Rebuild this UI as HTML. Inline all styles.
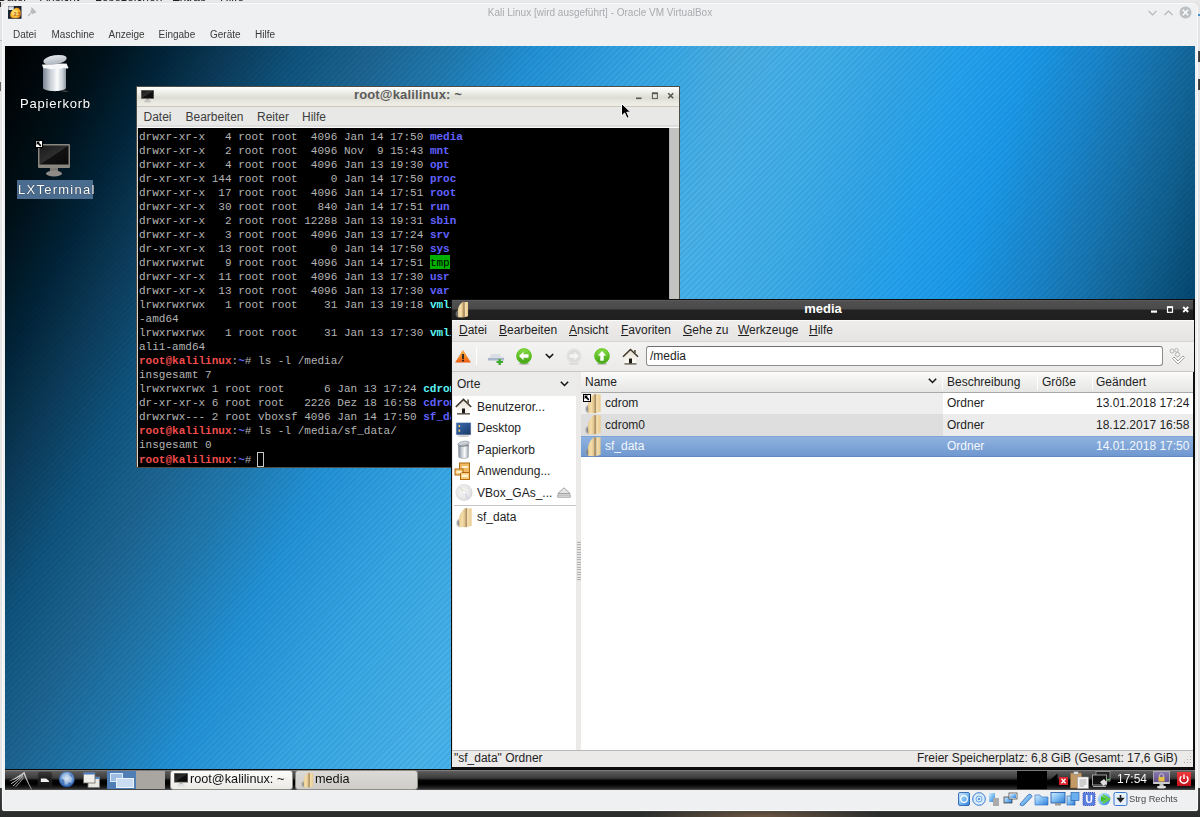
<!DOCTYPE html>
<html><head><meta charset="utf-8">
<style>
*{margin:0;padding:0;box-sizing:border-box}
html,body{width:1200px;height:817px;overflow:hidden;background:#e6e6e6;font-family:"Liberation Sans",sans-serif}
.a{position:absolute}
svg{position:absolute;overflow:visible}
#host-top{left:0;top:0;width:1200px;height:3px;background:#e9e9e9;overflow:hidden}
#host-top span{position:absolute;top:-10px;font-size:12px;color:#222;white-space:nowrap}
#host-bot{left:0;top:788px;width:1200px;height:29px;background:radial-gradient(ellipse 120px 10px at 760px 28px,#6a5540,rgba(0,0,0,0)),linear-gradient(#3a3c3c,#2a2c2c)}
#vbox{left:2px;top:3px;width:1196px;height:808px;background:#eff0f1;border:1px solid #fbfbfb;border-radius:4px 4px 2px 2px;box-shadow:0 0 1px #bbb}
#vbtitle{left:0;top:3px;width:1194px;text-align:center;font-size:10px;color:#a8abae}
.vbm{top:25px;font-size:10px;color:#3a3a3a}
#desk{left:5px;top:46px;width:1190px;height:724px;overflow:hidden;background:linear-gradient(117deg,#000000 -0.0%,#001018 6.1%,#012439 10.4%,#0b3856 14.0%,#0f547e 19.1%,#1d6694 24.1%,#207bb1 29.1%,#2292d7 34.2%,#36a6e5 41.4%,#49b3ea 50.0%,#41b2f1 55.8%,#29a4f0 63.0%,#1a9ae8 68.0%,#197fbf 73.1%,#11679c 78.1%,#084f7a 83.1%,#003759 88.2%,#001f38 100.0%)}
#deskR{left:675px;top:0;width:515px;height:260px;background:linear-gradient(107deg,#4faad4 0.0%,#4badde 6.4%,#47b0e8 16.9%,#3eade9 27.5%,#32a6e8 38.0%,#24a2ee 48.6%,#1b9ae9 59.1%,#1a88d0 69.7%,#1774af 80.3%,#0f5e8d 90.8%,#04466f 100.0%);-webkit-mask-image:linear-gradient(to right,rgba(0,0,0,0) 0,#000 70px);mask-image:linear-gradient(to right,rgba(0,0,0,0) 0,#000 70px)}
#stripes{left:0;top:0;width:1190px;height:724px;mix-blend-mode:multiply;background:repeating-linear-gradient(135deg,rgba(0,0,0,0) 0 2.1px,rgba(0,0,0,0.055) 2.1px 4.2px)}
.dlabel{color:#fff;font-size:13px;letter-spacing:0.5px;white-space:nowrap;text-shadow:0 0 1px #000}
/* terminal */
#term{left:136px;top:86px;width:544px;height:382px;background:#edece8;border:1px solid #4f4c45;box-shadow:inset 0 0 0 1px #d8d6cc}
#ttitle{left:0;top:0;width:542px;height:20px;background:linear-gradient(#ffffff 0,#f4f4f0 18%,#e6e6de 42%,#dcdcd2 55%,#e8e8e0 78%,#eeede6 100%);border-bottom:1px solid #cbc9bc}
#ttext{left:0;top:0px;width:542px;text-align:center;font-size:13px;font-weight:bold;color:#5b5b5b;letter-spacing:0.15px;padding-right:0}
#tmenu{left:0px;top:20px;width:542px;height:21px;background:#e8e8e6;border-bottom:1px solid #fbfbfb;box-shadow:inset 0 -2px 0 #dedede}
.tm{top:3px;font-size:12px;color:#3c3c3c}
#tscreen{left:1px;top:41px;width:532px;height:339px;background:#000;overflow:hidden}
#tsb{left:532px;top:41px;width:10px;height:339px;background:#c3c3c1;border-left:1px solid #b0b0ae}
pre{font-family:"Liberation Mono",monospace;font-size:11.03px;line-height:14px;color:#b4b4b4;position:absolute;left:1.0px;top:1.5px;white-space:pre}
.b{color:#6262ff;font-weight:bold}
.c{color:#5cf5f5;font-weight:bold}
.r{color:#f24c4c;font-weight:bold}
.tg{background:#00b000;color:#000;padding:1.5px 0 0.8px}
.cur{display:inline-block;width:7px;height:15px;border:1px solid #c8c8c8;vertical-align:-4px;margin-left:-1px}
/* file manager */
#fm{left:451px;top:299px;width:744px;height:470px;background:#e9e8e7;border:1px solid #0e0e0e;border-width:1px 2px 2px 1px}
#fmtitle{left:0;top:0;width:741px;height:20px;background:linear-gradient(#666 0,#505050 1px,#4a4a4a 45%,#222 50%,#1f1f1f 100%)}
#fmtext{left:0;top:1px;width:742px;text-align:center;font-size:13px;font-weight:bold;color:#fff}
#fmmenu{left:0;top:20px;width:742px;height:21px;background:linear-gradient(#efeeed,#e5e4e3);border-top:1px solid #fafafa}
.fmm{top:2px;font-size:12px;color:#1e1e1e}
.fmm i{font-style:normal;text-decoration:underline;text-underline-offset:1px}
#fmtool{left:0;top:41px;width:742px;height:31px;background:linear-gradient(#f3f3f2,#ebeae9);border-top:1px solid #d6d5d3;border-bottom:1px solid #c8c7c5}
#loc{left:194px;top:4px;width:517px;height:20px;background:#fff;border:1px solid #8e8d8b;border-top-color:#6f6e6c;border-radius:3px;font-size:12px;color:#1e1e1e;padding:2px 0 0 3px}
#side{left:1px;top:72px;width:123px;height:378px;background:#fff}
#sidehd{left:0;top:0;width:123px;height:24px;background:#ececeb}
.si{left:24px;font-size:12px;color:#1e1e1e;white-space:nowrap}
#split{left:124px;top:72px;width:5px;height:378px;background:#ebeae9}
#list{left:129px;top:72px;width:612px;height:378px;background:#fff;overflow:hidden}
#lhd{left:0;top:0;width:612px;height:21px;background:linear-gradient(#fbfbfb,#f2f2f1 40%,#e6e6e5);border-bottom:1px solid #a9a9a8}
.lh{top:3px;font-size:12px;color:#1e1e1e;white-space:nowrap}
.sep{top:3px;width:1px;height:15px;background:#d0d0cf;border-right:1px solid #fff}
.lt{font-size:12px;color:#1e1e1e;white-space:nowrap}
#fmstat{left:0;top:450px;width:741px;height:17px;background:#ebeae9;border-top:1px solid #b9b9b8}
/* taskbar */
#task{left:5px;top:769px;width:1190px;height:21px;border-top:1px solid #0a0a0a;background:linear-gradient(#8a8a8a 0,#5a5a5a 8%,#3c3c3c 40%,#050505 52%,#000 70%,#222 90%,#555 100%)}
#vbstat{left:0;top:787px;width:1194px;height:20px}
.tb{top:0px;height:20px;border:1px solid #8f8d88;border-radius:3px;background:linear-gradient(#fbfbfa,#ebeae6);font-size:12.7px;color:#111;white-space:nowrap}
</style></head><body>
<div class="a" id="host-top"><span style="left:-2px">Datei</span><span style="left:40px">Ansicht</span><span style="left:95px">Lesezeichen</span><span style="left:172px">Extras</span><span style="left:220px">Hilfe</span></div>
<div class="a" id="host-bot"></div>
<div class="a" style="left:0;top:2px;width:1px;height:5px;background:#333"></div><div class="a" style="left:0;top:40px;width:2px;height:1px;background:#bbb"></div><div class="a" style="left:0;top:82px;width:1px;height:9px;background:#666"></div>
<div class="a" style="left:1198px;top:51px;width:2px;height:11px;background:#3a3a3a"></div><div class="a" style="left:1198px;top:79px;width:2px;height:11px;background:#3a3a3a"></div><div class="a" style="left:1197px;top:14px;width:3px;height:2px;background:#3b8fd0"></div>
<div class="a" id="vbox">
  <div class="a" id="vbtitle">Kali Linux [wird ausgeführt] - Oracle VM VirtualBox</div>
  <div class="a vbm" style="left:10px">Datei</div>
  <div class="a vbm" style="left:48.5px">Maschine</div>
  <div class="a vbm" style="left:105.5px">Anzeige</div>
  <div class="a vbm" style="left:155.5px">Eingabe</div>
  <div class="a vbm" style="left:207px">Geräte</div>
  <div class="a vbm" style="left:252px">Hilfe</div>
</div>
<div class="a" id="desk"><div class="a" id="deskR"></div><div class="a" id="stripes"></div></div>
<div class="a dlabel" style="left:20px;top:96px;letter-spacing:0.8px">Papierkorb</div>
<div class="a" style="left:17px;top:180px;width:76px;height:19px;background:#4a6c8f"></div>
<div class="a dlabel" style="left:18px;top:182px;letter-spacing:1.25px">LXTerminal</div>

<div class="a" id="term">
  <div class="a" id="ttitle"><div class="a" id="ttext">root@kalilinux: ~</div></div>
  <div class="a" id="tmenu">
    <div class="a tm" style="left:6.5px">Datei</div>
    <div class="a tm" style="left:48.5px">Bearbeiten</div>
    <div class="a tm" style="left:120px">Reiter</div>
    <div class="a tm" style="left:165px">Hilfe</div>
  </div>
  <div class="a" id="tscreen"><pre>drwxr-xr-x   4 root root  4096 Jan 14 17:50 <span class="b">media</span>
drwxr-xr-x   2 root root  4096 Nov  9 15:43 <span class="b">mnt</span>
drwxr-xr-x   4 root root  4096 Jan 13 19:30 <span class="b">opt</span>
dr-xr-xr-x 144 root root     0 Jan 14 17:50 <span class="b">proc</span>
drwxr-xr-x  17 root root  4096 Jan 14 17:51 <span class="b">root</span>
drwxr-xr-x  30 root root   840 Jan 14 17:51 <span class="b">run</span>
drwxr-xr-x   2 root root 12288 Jan 13 19:31 <span class="b">sbin</span>
drwxr-xr-x   3 root root  4096 Jan 13 17:24 <span class="b">srv</span>
dr-xr-xr-x  13 root root     0 Jan 14 17:50 <span class="b">sys</span>
drwxrwxrwt   9 root root  4096 Jan 14 17:51 <span class="tg">tmp</span>
drwxr-xr-x  11 root root  4096 Jan 13 17:30 <span class="b">usr</span>
drwxr-xr-x  13 root root  4096 Jan 13 17:30 <span class="b">var</span>
lrwxrwxrwx   1 root root    31 Jan 13 19:18 <span class="c">vmlinuz</span> -&gt; boot/vmlinuz-4.14.0-kali1
-amd64
lrwxrwxrwx   1 root root    31 Jan 13 17:30 <span class="c">vmlinuz.old</span> -&gt; boot/vmlinuz-4.13.0-k
ali1-amd64
<span class="r">root@kalilinux</span>:<span class="b">~</span># ls -l /media/
insgesamt 7
lrwxrwxrwx 1 root root      6 Jan 13 17:24 <span class="c">cdrom</span> -&gt; <span class="b">/media/cdrom0</span>
dr-xr-xr-x 6 root root   2226 Dez 18 16:58 <span class="b">cdrom0</span>
drwxrwx--- 2 root vboxsf 4096 Jan 14 17:50 <span class="b">sf_data</span>
<span class="r">root@kalilinux</span>:<span class="b">~</span># ls -l /media/sf_data/
insgesamt 0
<span class="r">root@kalilinux</span>:<span class="b">~</span># <span class="cur"></span></pre></div>
  <div class="a" id="tsb"></div>
</div>

<div class="a" id="fm">
  <div class="a" id="fmtitle"><div class="a" id="fmtext">media</div></div>
  <div class="a" id="fmmenu">
    <div class="a fmm" style="left:7px"><i>D</i>atei</div>
    <div class="a fmm" style="left:47px"><i>B</i>earbeiten</div>
    <div class="a fmm" style="left:117px"><i>A</i>nsicht</div>
    <div class="a fmm" style="left:169px"><i>F</i>avoriten</div>
    <div class="a fmm" style="left:231px"><i>G</i>ehe zu</div>
    <div class="a fmm" style="left:286px"><i>W</i>erkzeuge</div>
    <div class="a fmm" style="left:357px"><i>H</i>ilfe</div>
  </div>
  <div class="a" id="fmtool">
    <div class="a" id="loc">/media</div>
  </div>
  <div class="a" id="side">
    <div class="a" id="sidehd"><div class="a lt" style="left:4px;top:5px">Orte</div></div>
    <div class="a si" style="top:28px">Benutzeror...</div>
    <div class="a si" style="top:49px">Desktop</div>
    <div class="a si" style="top:71px">Papierkorb</div>
    <div class="a si" style="top:92px">Anwendung...</div>
    <div class="a si" style="top:114px">VBox_GAs_...</div>
    <div class="a" style="left:1px;top:133px;width:122px;height:1px;background:#c4c4c4"></div>
    <div class="a si" style="top:138px">sf_data</div>
  </div>
  <div class="a" id="split"></div>
  <div class="a" id="list">
    <div class="a" id="lhd">
      <div class="a lh" style="left:4px">Name</div>
      <div class="a lh" style="left:366px">Beschreibung</div>
      <div class="a lh" style="left:461px">Größe</div>
      <div class="a lh" style="left:515px">Geändert</div>
      <div class="a sep" style="left:361px"></div><div class="a sep" style="left:456px"></div><div class="a sep" style="left:511px"></div>
    </div>
    <div class="a" style="left:0;top:21px;width:362px;height:21px;background:#eeeeee"></div>
    <div class="a" style="left:0;top:42px;width:612px;height:22px;background:#ececec"></div>
    <div class="a" style="left:0;top:42px;width:362px;height:22px;background:#dedede"></div>
    <div class="a" style="left:0;top:64px;width:612px;height:21px;background:linear-gradient(#8fb2df,#6f98d0);border-top:1px solid #7ea3d6;border-bottom:1px solid #5f88c4"></div>
    <div class="a lt" style="left:24px;top:24px">cdrom</div>
    <div class="a lt" style="left:24px;top:46px">cdrom0</div>
    <div class="a lt" style="left:24px;top:67px;color:#f4f7fb">sf_data</div>
    <div class="a lt" style="left:366px;top:24px">Ordner</div>
    <div class="a lt" style="left:366px;top:46px">Ordner</div>
    <div class="a lt" style="left:366px;top:67px;color:#f4f7fb">Ordner</div>
    <div class="a lt" style="left:515px;top:24px">13.01.2018 17:24</div>
    <div class="a lt" style="left:515px;top:46px">18.12.2017 16:58</div>
    <div class="a lt" style="left:515px;top:67px;color:#f4f7fb">14.01.2018 17:50</div>
  </div>
  <div class="a" id="fmstat">
    <div class="a lt" style="left:2px;top:0px">"sf_data" Ordner</div>
    <div class="a lt" style="left:465px;top:0px">Freier Speicherplatz: 6,8 GiB (Gesamt: 17,6 GiB)</div>
  </div>
</div>

<div class="a" id="task">
  <div class="a tb" style="left:165px;width:123px"><span class="a" style="left:19px;top:1px">root@kalilinux: ~</span></div>
  <div class="a tb" style="left:290px;width:123px;background:linear-gradient(#dcdad6,#cfcdc9)"><span class="a" style="left:19px;top:1px">media</span></div>
</div>
<div class="a" style="left:1129px;top:794px;font-size:9.3px;color:#4a4a4a">Strg Rechts</div>
<svg width="0" height="0" style="position:absolute">
<defs>
<linearGradient id="gFold" x1="0" y1="0" x2="1" y2="0"><stop offset="0" stop-color="#e6c88c"/><stop offset=".5" stop-color="#f5dfae"/><stop offset="1" stop-color="#dcbc80"/></linearGradient>
<linearGradient id="gFold2" x1="0" y1="0" x2="1" y2="0"><stop offset="0" stop-color="#f6e2b0"/><stop offset="1" stop-color="#e8c98e"/></linearGradient>
<radialGradient id="gShad" cx="0.55" cy="0.5" r="0.5"><stop offset="0" stop-color="#6a6a6a" stop-opacity="1"/><stop offset=".6" stop-color="#8a8a8a" stop-opacity=".7"/><stop offset="1" stop-color="#aaa" stop-opacity="0"/></radialGradient>
<symbol id="folder" viewBox="0 0 17 21">
 <ellipse cx="4.2" cy="16" rx="4" ry="5" fill="url(#gShad)"/>
 <path d="M4.3 20 L4 11.5 C4.2 7.5 6.5 3.5 10.3 1 L10.3 20.3Z" fill="url(#gFold)"/>
 <path d="M10.3 1 L12.4 1.3 L12.4 20 L10.3 20.3Z" fill="#b39360"/>
 <path d="M12.4 1.3 L16.6 1.3 L16.6 18.8 L12.4 20Z" fill="url(#gFold2)"/>
</symbol>
<symbol id="badge" viewBox="0 0 8 8">
 <rect x="0.5" y="0.5" width="7" height="7" fill="#fff" stroke="#000" stroke-width="1"/>
 <path d="M1.6 1.6 L5 1.6 L4 2.7 L6.4 5.3 L5.3 6.4 L2.7 4 L1.6 5Z" fill="#000"/>
</symbol>
<linearGradient id="gGreen" x1="0" y1="0" x2="0" y2="1"><stop offset="0" stop-color="#8be04a"/><stop offset="1" stop-color="#3f9e10"/></linearGradient>
<linearGradient id="gTrash" x1="0" y1="0" x2="1" y2="0"><stop offset="0" stop-color="#8c96a0"/><stop offset=".35" stop-color="#e8ecef"/><stop offset=".6" stop-color="#ffffff"/><stop offset="1" stop-color="#9aa4ad"/></linearGradient>
<linearGradient id="gMon" x1="0" y1="0" x2="1" y2="1"><stop offset="0" stop-color="#1a1a1a"/><stop offset=".5" stop-color="#2e2e2e"/><stop offset=".51" stop-color="#111"/><stop offset="1" stop-color="#0a0a0a"/></linearGradient>
<symbol id="monitor" viewBox="0 0 32 33">
 <rect x="0" y="0" width="32" height="24" rx="1" fill="#8a8680"/>
 <rect x="1.5" y="1.5" width="29" height="19" fill="url(#gMon)"/>
 <rect x="12" y="24" width="8" height="4" fill="#7d7a75"/>
 <ellipse cx="16" cy="29.5" rx="8" ry="3" fill="#8f8b86"/>
</symbol>
</defs>
</svg>

<!-- VBox title icons -->
<svg style="left:8px;top:6px" width="13.5" height="12.8" viewBox="0 0 13.5 12.8">
 <defs><radialGradient id="gVbx" cx=".45" cy=".5" r=".6"><stop offset="0" stop-color="#fff3a0"/><stop offset=".55" stop-color="#fbc840"/><stop offset="1" stop-color="#e07a10"/></radialGradient></defs>
 <rect x="0" y="0" width="13.5" height="12.8" fill="#1a2432"/>
 <path d="M2.2 8.5 C2.5 5.5 5 3 8 1.8 C10.5 1.2 12.5 3 12.8 6 C13 9 12.5 11.5 10 12 C7 12.5 4 12.3 2.8 11.2 C2.2 10.5 2 9.5 2.2 8.5Z" fill="url(#gVbx)"/>
 <text x="5.8" y="10" font-size="5" font-weight="bold" fill="#b05a20" font-family="Liberation Sans">2.5</text>
 <rect x="0.3" y="0.3" width="5.5" height="3.6" fill="#cfd3d8"/><rect x="1" y="2.6" width="4" height=".9" fill="#fff"/>
</svg>
<svg style="left:27px;top:8px" width="9" height="9" viewBox="0 0 9 9"><path d="M5 0.5 L8.5 4 L7.5 4.5 L5.8 5.5 L4 3.5 L5 2Z M4.6 4.4 L1 8" stroke="#b9bcbf" stroke-width="1.3" fill="#b9bcbf"/></svg>
<svg style="left:1148px;top:10px" width="9" height="6" viewBox="0 0 9 6"><path d="M0.5 0.8 L4.5 4.8 L8.5 0.8" stroke="#b3b6b9" stroke-width="1.2" fill="none"/></svg>
<svg style="left:1164px;top:9.5px" width="9" height="6" viewBox="0 0 9 6"><path d="M0.5 5 L4.5 1 L8.5 5" stroke="#b3b6b9" stroke-width="1.2" fill="none"/></svg>
<svg style="left:1179px;top:6px" width="13" height="13" viewBox="0 0 13 13"><circle cx="6.5" cy="6.5" r="6" fill="#bdc0c3"/><path d="M3.8 3.8 L9.2 9.2 M9.2 3.8 L3.8 9.2" stroke="#fff" stroke-width="1.3"/></svg>

<!-- desktop icons -->
<svg style="left:40px;top:53px" width="30" height="41" viewBox="0 0 30 41">
 <defs><linearGradient id="gTrash2" x1="0" y1="0" x2="1" y2="0"><stop offset="0" stop-color="#7a8591"/><stop offset=".3" stop-color="#c3cad1"/><stop offset=".62" stop-color="#fafbfc"/><stop offset=".85" stop-color="#c8cfd6"/><stop offset="1" stop-color="#8a95a0"/></linearGradient>
 <linearGradient id="gLid" x1="0" y1="0" x2="0" y2="1"><stop offset="0" stop-color="#e4e8ec"/><stop offset="1" stop-color="#aab3bc"/></linearGradient></defs>
 <path d="M3 12 L26 12 L26 35.5 C22 39 7 39 3 35.5Z" fill="url(#gTrash2)"/>
 <path d="M2 11.5 C8 10.5 20 10 26.5 10.5 L28.5 15 C26 16.5 24 14 22 15.5 C19 17 16 14.5 13 16 C10 17 7 14.5 4 15.5 C3 15 2.5 13 2 11.5Z" fill="#f6f7f8"/>
 <path d="M2.5 11.5 C10 10.5 20 10 26.5 10.5" stroke="#555" stroke-width=".8" fill="none"/>
 <ellipse cx="15" cy="6.8" rx="11.8" ry="4.6" transform="rotate(-9 15 6.8)" fill="url(#gLid)"/>
 <path d="M22 37.5 C25 37 27 37.5 28.5 39 L22.5 39Z" fill="#3a3a3a"/>
</svg>
<svg style="left:38px;top:144px" width="32" height="33"><use href="#monitor" width="32" height="33"/></svg>
<svg style="left:35px;top:140px" width="8" height="8"><use href="#badge" width="8" height="8"/></svg>

<!-- terminal title icon + buttons -->
<svg style="left:141px;top:90px" width="13" height="13" viewBox="0 0 13 13">
 <rect x="0" y="0" width="13" height="9" fill="#7d7a74"/><rect x="0.6" y="0.6" width="11.8" height="7.6" fill="url(#gMon)"/>
 <rect x="5" y="9" width="3" height="1.5" fill="#aaa"/><ellipse cx="6.5" cy="11.3" rx="3.5" ry="1.3" fill="#c8c6c0"/>
</svg>
<svg style="left:636px;top:92px" width="40" height="8" viewBox="0 0 40 8">
 <rect x="0" y="5.5" width="5.5" height="1.6" fill="#555"/>
 <rect x="16.4" y="1" width="5" height="5.6" fill="none" stroke="#555" stroke-width="1"/><rect x="16" y="0.6" width="5.8" height="1.6" fill="#555"/>
 <path d="M32.2 1.2 L37.2 6.2 M37.2 1.2 L32.2 6.2" stroke="#555" stroke-width="1.6"/>
</svg>
<!-- FM title icon + buttons -->
<svg style="left:454px;top:301px" width="15" height="17"><use href="#folder" width="15" height="17"/></svg>
<svg style="left:1151px;top:306px" width="40" height="8" viewBox="0 0 40 8">
 <rect x="0" y="4.5" width="6" height="2.2" fill="#fff"/>
 <rect x="16.5" y="1" width="5" height="5.3" fill="none" stroke="#fff" stroke-width="1.2"/><rect x="16" y="0.4" width="6" height="1.6" fill="#fff"/>
 <path d="M32.2 1 L37.2 6 M37.2 1 L32.2 6" stroke="#fff" stroke-width="1.8"/>
</svg>
<!-- toolbar -->
<svg style="left:455px;top:350px" width="16" height="13" viewBox="0 0 16 13">
 <defs><linearGradient id="gWarn" x1="0" y1="0" x2="0" y2="1"><stop offset="0" stop-color="#ffc040"/><stop offset="1" stop-color="#f05a10"/></linearGradient></defs>
 <path d="M8 0.5 L15.5 12.3 L0.5 12.3Z" fill="url(#gWarn)" stroke="#e07020" stroke-width=".5"/>
 <rect x="7.1" y="4" width="1.8" height="5" fill="#222"/><rect x="7.1" y="9.8" width="1.8" height="1.6" fill="#222"/>
</svg>
<div class="a" style="left:476px;top:347px;width:1px;height:18px;background:#b9b9b8;border-right:1px solid #fff"></div>
<svg style="left:488px;top:353px" width="17" height="12" viewBox="0 0 17 12">
 <path d="M3 1 L12 1 L13 4 L16 4 L16 7 L1 7 L1 4 L2 4Z" fill="#d9dde4"/>
 <path d="M0 5 L16 5 L16 7.5 L0 7.5Z" fill="#aab6cc"/>
 <path d="M10.5 6 L12.8 6 L12.8 8 L15 8 L15 10 L12.8 10 L12.8 12 L10.5 12 L10.5 10 L8.5 10 L8.5 8 L10.5 8Z" fill="#3faa2a"/>
</svg>
<svg style="left:516px;top:348px" width="16" height="17" viewBox="0 0 16 17">
 <ellipse cx="8" cy="15.8" rx="5" ry="1" fill="#000" opacity=".25"/>
 <circle cx="8" cy="8" r="7.7" fill="url(#gGreen)"/><circle cx="8" cy="8" r="7.2" fill="none" stroke="#5cc020" stroke-width=".8"/>
 <path d="M3 8 L7.5 3.8 L7.5 6.3 L12.5 6.3 L12.5 9.7 L7.5 9.7 L7.5 12.2Z" fill="#fff"/>
</svg>
<svg style="left:545px;top:353px" width="9" height="6" viewBox="0 0 9 6"><path d="M0.8 1 L4.5 4.6 L8.2 1" stroke="#111" stroke-width="1.5" fill="none"/></svg>
<svg style="left:566px;top:348px" width="16" height="17" viewBox="0 0 16 17">
 <ellipse cx="8" cy="15.8" rx="5" ry="1" fill="#000" opacity=".08"/>
 <circle cx="8" cy="8" r="7.5" fill="#dcdcdb"/><circle cx="8" cy="8" r="6.8" fill="none" stroke="#e8e8e7" stroke-width=".8"/>
 <path d="M13 8 L8.5 3.8 L8.5 6.3 L3.5 6.3 L3.5 9.7 L8.5 9.7 L8.5 12.2Z" fill="#f4f4f4"/>
</svg>
<svg style="left:594px;top:348px" width="16" height="17" viewBox="0 0 16 17">
 <ellipse cx="8" cy="15.8" rx="5" ry="1" fill="#000" opacity=".25"/>
 <circle cx="8" cy="8" r="7.7" fill="url(#gGreen)"/><circle cx="8" cy="8" r="7.2" fill="none" stroke="#5cc020" stroke-width=".8"/>
 <path d="M8 3 L12.2 7.5 L9.7 7.5 L9.7 12.8 L6.3 12.8 L6.3 7.5 L3.8 7.5Z" fill="#fff"/>
</svg>
<svg style="left:622px;top:348px" width="17" height="17" viewBox="0 0 17 17">
 <defs><linearGradient id="gHouse" x1="0" y1="0" x2="0" y2="1"><stop offset="0" stop-color="#e8e0d4"/><stop offset="1" stop-color="#fffdf8"/></linearGradient></defs>
 <path d="M3 8 L8.5 2.8 L14 8 L14 15.5 L3 15.5Z" fill="url(#gHouse)"/>
 <path d="M1 8.8 L8.5 1.5 L16 8.8" stroke="#3d3528" stroke-width="1.5" fill="none"/>
 <rect x="12" y="2" width="1.8" height="3" fill="#6a6050"/>
 <rect x="7" y="10.5" width="3" height="5" fill="#1c1a16"/><rect x="2.5" y="15.3" width="12" height="1.2" fill="#4a4438"/>
</svg>
<svg style="left:1168px;top:348px" width="20" height="18" viewBox="0 0 20 18">
 <circle cx="4" cy="3" r="2" fill="none" stroke="#aaa" stroke-width=".8"/><circle cx="8.5" cy="2.2" r="1.8" fill="none" stroke="#aaa" stroke-width=".8"/>
 <circle cx="9.5" cy="6.5" r="2.2" fill="none" stroke="#aaa" stroke-width=".8"/>
 <path d="M6 9 L10 13 L15 8 L16.5 9.5 L10 16 L4.5 10.5Z" fill="#fff" stroke="#999" stroke-width=".9"/>
</svg>
<!-- sidebar icons -->
<svg style="left:455px;top:398px" width="17" height="17" viewBox="0 0 17 17">
 <path d="M2.5 8.2 L8.5 2.6 L14.5 8.2 L14.5 15.5 L2.5 15.5Z" fill="url(#gHouse)"/>
 <path d="M0.8 9 L8.5 1.4 L16.2 9" stroke="#3d3528" stroke-width="1.6" fill="none"/>
 <rect x="12.2" y="1.5" width="1.8" height="3.5" fill="#6a6050"/>
 <rect x="7" y="10.5" width="3" height="5" fill="#1c1a16"/><rect x="2" y="15.2" width="13" height="1.3" fill="#4a4438"/>
</svg>
<svg style="left:456px;top:422px" width="15" height="15" viewBox="0 0 15 15">
 <defs><linearGradient id="gDesk" x1="0" y1="0" x2="1" y2="1"><stop offset="0" stop-color="#3a6aa8"/><stop offset=".5" stop-color="#2a5490"/><stop offset="1" stop-color="#16365e"/></linearGradient></defs>
 <ellipse cx="7.5" cy="14" rx="6" ry="1" fill="#000" opacity=".2"/>
 <rect x="0" y="0.5" width="15" height="12.5" fill="url(#gDesk)" stroke="#dde" stroke-width=".6"/>
 <rect x="2.5" y="3" width="1.6" height="2.2" fill="#f0c860"/><rect x="2.5" y="7.5" width="1.6" height="2.2" fill="#f0c860"/>
</svg>
<svg style="left:457px;top:440px" width="13" height="19" viewBox="0 0 13 19">
 <path d="M1.5 5 L11.5 5 L11.2 17.3 C8 18.8 5 18.8 1.8 17.3Z" fill="url(#gTrash2)" stroke="#8a939c" stroke-width=".6"/>
 <path d="M1.2 5.5 C4 6.5 9 6.5 11.8 5.2" stroke="#666" stroke-width=".7" fill="none"/>
 <ellipse cx="6.5" cy="3.6" rx="5.8" ry="2.2" transform="rotate(-10 6.5 3.6)" fill="url(#gLid)" stroke="#7a838c" stroke-width=".6"/>
</svg>
<svg style="left:454px;top:462px" width="19" height="18" viewBox="0 0 19 18">
 <rect x="5.5" y="1" width="10" height="10" fill="#f0b860" stroke="#b06a10" stroke-width="1"/>
 <rect x="1" y="7" width="8" height="6" fill="#f6c878" stroke="#b06a10" stroke-width="1"/>
 <rect x="6.5" y="10.5" width="9" height="7" fill="#f6c878" stroke="#b06a10" stroke-width="1"/>
 <rect x="8" y="12.5" width="6" height="2.5" fill="#fff2d0"/><rect x="2.5" y="9" width="5" height="2" fill="#fff2d0"/><rect x="8" y="4" width="6" height="2" fill="#fff2d0"/>
</svg>
<svg style="left:455px;top:484px" width="18" height="18" viewBox="0 0 18 18">
 <defs><radialGradient id="gCD" cx=".45" cy=".45" r=".6"><stop offset="0" stop-color="#fafafa"/><stop offset=".7" stop-color="#e4e4e4"/><stop offset="1" stop-color="#cfcfcf"/></radialGradient></defs>
 <circle cx="9" cy="8.5" r="8.5" fill="url(#gCD)"/><circle cx="9" cy="8.5" r="1.8" fill="#fff" stroke="#ccc" stroke-width=".5"/>
 <path d="M5 3 L8 7.5" stroke="#d8e0c8" stroke-width="1.2"/><path d="M10.5 10 L13 15" stroke="#d6cde8" stroke-width="1.2"/>
</svg>
<svg style="left:557px;top:487px" width="14" height="11" viewBox="0 0 14 11"><path d="M7 0.8 L13.2 6.5 L0.8 6.5Z" fill="#e6e6e6" stroke="#9a9a9a" stroke-width=".9"/><rect x="0.8" y="8" width="12.4" height="2.2" fill="#e6e6e6" stroke="#9a9a9a" stroke-width=".9"/></svg>
<svg style="left:455px;top:507px" width="17" height="21"><use href="#folder" width="17" height="21"/></svg>
<!-- list icons -->
<svg style="left:584px;top:393px" width="17" height="21"><use href="#folder" width="17" height="21"/></svg>
<svg style="left:583px;top:394px" width="8" height="8"><use href="#badge" width="8" height="8"/></svg>
<svg style="left:584px;top:414px" width="17" height="21"><use href="#folder" width="17" height="21"/></svg>
<svg style="left:584px;top:436px" width="17" height="21"><use href="#folder" width="17" height="21"/></svg>
<!-- splitter dots & resize grip -->
<div class="a" style="left:577px;top:541px;width:4px;height:40px;background:radial-gradient(circle,#9c9c9c 0.6px,transparent 0.9px) 0 0/2px 2.5px"></div>
<div class="a" style="left:1180px;top:752px;width:12px;height:13px;background:radial-gradient(circle,#aaa 0.6px,transparent 0.9px) 0 0/3px 3px;clip-path:polygon(100% 0,100% 100%,0 100%)"></div>
<!-- mouse cursor -->
<svg style="left:621px;top:103px" width="11" height="17" viewBox="0 0 11 17">
 <path d="M0.5 0.5 L0.5 13 L3.6 10 L6 15.3 L8.2 14.3 L5.8 9.2 L9.8 9.2Z" fill="#000" stroke="#fff" stroke-width="1"/>
</svg>

<!-- Orte chevron -->
<svg style="left:560px;top:381px" width="9" height="6" viewBox="0 0 9 6"><path d="M0.8 0.8 L4.5 4.5 L8.2 0.8" stroke="#111" stroke-width="1.5" fill="none"/></svg>
<svg style="left:928px;top:378px" width="9" height="6" viewBox="0 0 9 6"><path d="M0.8 0.8 L4.5 4.5 L8.2 0.8" stroke="#111" stroke-width="1.5" fill="none"/></svg>
<!-- taskbar launchers -->
<svg style="left:8px;top:771px" width="25" height="19" viewBox="0 0 25 19">
 <defs><linearGradient id="gDrag" x1="0" y1="0" x2="1" y2="1"><stop offset="0" stop-color="#f4f4f4"/><stop offset="1" stop-color="#9a9a9a"/></linearGradient></defs>
 <path d="M16.4 0.8 C17.5 4 20 11 24 18.3 L23.2 18.4 C19.5 12 17 6.5 15.6 3 C12 6 6 9 0.8 10.3 C6 8 11.5 4.5 16.4 0.8Z" fill="url(#gDrag)"/>
 <path d="M15 3.8 C11 7.5 7 10.5 3.2 12.6" stroke="#d0d0d0" stroke-width="1" fill="none"/>
 <path d="M15.2 5 C12 8.5 8.5 12 5 15" stroke="#b8b8b8" stroke-width="1" fill="none"/>
 <path d="M15.6 6.5 C13 10 10.5 13 7.6 15.8" stroke="#a8a8a8" stroke-width="1" fill="none"/>
</svg>
<svg style="left:38px;top:772px" width="14" height="16" viewBox="0 0 14 16">
 <defs><linearGradient id="gTermL" x1="0" y1="0" x2="0" y2="1"><stop offset="0" stop-color="#3a3a3a"/><stop offset=".4" stop-color="#1e1e1e"/><stop offset="1" stop-color="#141414"/></linearGradient></defs>
 <rect x="0.3" y="0.3" width="13.4" height="15.4" rx="2" fill="url(#gTermL)" stroke="#2a2a2a" stroke-width=".6"/>
 <path d="M2.8 6.4 L8.2 6.4 L11 9 L11 10 L2.8 10Z" fill="#f0f0f0"/>
</svg>
<svg style="left:58px;top:771px" width="18" height="18" viewBox="0 0 18 18">
 <defs><radialGradient id="gGlobe" cx=".5" cy=".45" r=".55"><stop offset="0" stop-color="#dfe9f6"/><stop offset=".55" stop-color="#9dbbe0"/><stop offset=".85" stop-color="#3a6eb8"/><stop offset="1" stop-color="#17469a"/></radialGradient></defs>
 <circle cx="8.8" cy="8.3" r="7.9" fill="url(#gGlobe)"/>
 <path d="M3 9 C4 7 6 8 6.5 10.5 C7 13 5 14 4 13Z M10 12 C12 11 14 12 13 14.5 C11.5 15.5 10 14 10 12Z M11 3 C13 3 15 5 14.5 6.5 C13 6 12 5 11 3Z" fill="#3468b0" opacity=".7"/>
</svg>
<svg style="left:83px;top:772px" width="17" height="16" viewBox="0 0 17 16">
 <rect x="5" y="5" width="11.5" height="10.5" fill="#e8e6e0" stroke="#777" stroke-width=".8"/><rect x="5" y="5" width="11.5" height="2" fill="#5a86c8"/>
 <rect x="0.5" y="0.5" width="11.5" height="10.5" fill="#f0efea" stroke="#666" stroke-width=".8"/><rect x="0.5" y="0.5" width="11.5" height="2" fill="#4a7ac0"/>
</svg>
<div class="a" style="left:107px;top:771px;width:29px;height:18px;background:#4f7db5"></div>
<div class="a" style="left:110px;top:773px;width:13px;height:9px;background:#9cbce2;border:1px solid #dfeaf7"></div>
<div class="a" style="left:116px;top:778px;width:18px;height:10px;background:#c9dcf2;border:1px solid #eef4fb"></div>
<div class="a" style="left:136px;top:771px;width:29px;height:18px;background:#a9a5a0"></div>
<!-- taskbar button icons -->
<svg style="left:174px;top:773px" width="14" height="14" viewBox="0 0 13 13">
 <rect x="0" y="0" width="13" height="9" fill="#7d7a74"/><rect x="0.6" y="0.6" width="11.8" height="7.6" fill="url(#gMon)"/>
 <rect x="5" y="9" width="3" height="1.5" fill="#aaa"/><ellipse cx="6.5" cy="11.3" rx="3.5" ry="1.3" fill="#ddd"/>
</svg>
<svg style="left:300px;top:772px" width="14" height="16"><use href="#folder" width="14" height="16"/></svg>
<!-- tray -->
<div class="a" style="left:1017px;top:771px;width:30px;height:18px;background:#000"></div>
<svg style="left:1049px;top:773px" width="9" height="14" viewBox="0 0 9 14"><path d="M8.5 0.5 L1 7 L8.5 13.5Z" fill="#000"/></svg>
<svg style="left:1059px;top:777px" width="9" height="8" viewBox="0 0 9 8"><rect x="0" y="0" width="9" height="8" fill="#d8202a"/><path d="M2.5 1.8 L6.5 6.2 M6.5 1.8 L2.5 6.2" stroke="#fff" stroke-width="1.3"/></svg>
<svg style="left:1070px;top:771px" width="19" height="18" viewBox="0 0 19 18">
 <rect x="0.5" y="2" width="11" height="15" fill="#c49a64" stroke="#8a6a40" stroke-width=".6"/>
 <rect x="3.5" y="0.5" width="5" height="3" rx="1" fill="#ddd" stroke="#777" stroke-width=".6"/>
 <rect x="7.5" y="6" width="11" height="11.5" fill="#f4f4f4" stroke="#999" stroke-width=".6"/>
 <path d="M9.5 9 H16.5 M9.5 11 H16.5 M9.5 13 H16.5 M9.5 15 H14" stroke="#888" stroke-width=".7"/>
</svg>
<svg style="left:1092px;top:771px" width="19" height="17" viewBox="0 0 19 17">
 <rect x="4" y="0.5" width="14" height="9.5" fill="#222" stroke="#999" stroke-width=".8"/>
 <rect x="0.5" y="4" width="14" height="10" fill="#111" stroke="#bbb" stroke-width=".8"/>
 <path d="M1 15.5 H14" stroke="#aaa" stroke-width="1"/>
 <path d="M8 11 L12 8 L15.5 12 L11.5 15Z" fill="#ddd"/><path d="M15 9 L18 8" stroke="#6c6" stroke-width="1.2"/>
</svg>
<div class="a" style="left:1117px;top:772px;font-size:12px;color:#f4f4f4;letter-spacing:0px">17:54</div>
<svg style="left:1153px;top:771px" width="17" height="18" viewBox="0 0 17 18">
 <defs><linearGradient id="gLockMon" x1="0" y1="0" x2="0" y2="1"><stop offset="0" stop-color="#8a78b0"/><stop offset="1" stop-color="#5e4a88"/></linearGradient></defs>
 <rect x="0.5" y="0.5" width="16" height="12" fill="url(#gLockMon)" stroke="#bbb" stroke-width=".8"/>
 <rect x="0.5" y="11" width="16" height="2" fill="#ccc"/>
 <rect x="6.5" y="13" width="4" height="2" fill="#bbb"/><ellipse cx="8.5" cy="16" rx="4.5" ry="1.5" fill="#ddd"/>
 <path d="M6.3 6 V4.5 C6.3 2.3 10.7 2.3 10.7 4.5 V6" stroke="#ccc" stroke-width="1" fill="none"/>
 <rect x="5.5" y="6" width="6" height="4.5" fill="#e8c040"/>
</svg>
<svg style="left:1177px;top:772px" width="14" height="14" viewBox="0 0 14 14">
 <defs><linearGradient id="gPow" x1="0" y1="0" x2="0" y2="1"><stop offset="0" stop-color="#f0383c"/><stop offset="1" stop-color="#c0101a"/></linearGradient></defs>
 <rect x="0" y="0" width="14" height="14" fill="url(#gPow)"/>
 <path d="M4.4 4.3 A4 4 0 1 0 9.6 4.3" stroke="#fff" stroke-width="1.5" fill="none"/><path d="M7 2.5 V7" stroke="#fff" stroke-width="1.5"/>
</svg>
<!-- VBox status icons -->
<svg style="left:958px;top:792px" width="170" height="14" viewBox="0 0 170 14">
 <defs><linearGradient id="gVb" x1="0" y1="0" x2="1" y2="1"><stop offset="0" stop-color="#d4ecfd"/><stop offset=".5" stop-color="#7cbcf2"/><stop offset="1" stop-color="#2a7ad6"/></linearGradient></defs>
 <rect x="0.5" y="0.5" width="11" height="13" rx="1.5" fill="url(#gVb)" stroke="#1a56a8" stroke-width=".8"/><circle cx="6" cy="7" r="3.3" fill="none" stroke="#fff" stroke-width="1.2"/>
 <circle cx="21" cy="7" r="6.3" fill="#d8ecfc" stroke="#3a7ad0" stroke-width="1"/><circle cx="21" cy="7" r="3" fill="none" stroke="#6aa8e8" stroke-width="1"/><circle cx="21" cy="7" r="1" fill="#3a7ad0"/>
 <path d="M31 1 L37 1 L37 10 L31 10Z" fill="url(#gVb)"/><rect x="35" y="6" width="6" height="8" fill="#aaa"/>
 <rect x="46" y="5" width="8" height="6" fill="url(#gVb)" stroke="#333" stroke-width=".7"/><rect x="51" y="1" width="8" height="6" fill="#fff" stroke="#333" stroke-width=".7"/><rect x="52" y="2" width="6" height="4" fill="url(#gVb)"/>
 <path d="M62 12 L70 3 C71 2 73 2 73.5 3.5 L74 4.5 L66 13 C64 14 62 14 62 12Z" fill="url(#gVb)" stroke="#1a56a8" stroke-width=".7"/>
 <path d="M77 3 L82 3 L83.5 5 L90 5 L90 13 L77 13Z" fill="url(#gVb)" stroke="#2a6ac0" stroke-width=".6"/>
 <rect x="93" y="0.5" width="14" height="10.5" fill="url(#gVb)" stroke="#1a56a8" stroke-width=".8"/><rect x="97" y="11" width="6" height="2.5" fill="#999"/>
 <rect x="109" y="4" width="8" height="9" fill="url(#gVb)" stroke="#1a56a8" stroke-width=".6"/><rect x="113" y="0.5" width="8" height="8" fill="#6ab0f0" stroke="#1a56a8" stroke-width=".6"/>
 <rect x="125" y="0.5" width="12" height="13" rx="1" fill="#5a7ee0" stroke="#3a4ab0" stroke-width="1" stroke-dasharray="1 1"/><text x="127.5" y="11" font-size="10" font-weight="bold" fill="#fff" font-family="Liberation Sans">U</text>
 <circle cx="146" cy="7" r="6.3" fill="url(#gVb)"/><path d="M143 4 L149 7 L143 10Z" fill="#40c020"/><path d="M145 3 L151 7 L145 11" stroke="#60d030" stroke-width="2" fill="none"/>
 <rect x="156" y="0.5" width="13" height="13" rx="1.5" fill="#e8f2fc" stroke="#3a7ad0" stroke-width="1"/><path d="M162.5 3 V8 M160 6.5 L162.5 9.5 L165 6.5Z" stroke="#222" stroke-width="1.6" fill="#222"/>
</svg>

</body></html>
